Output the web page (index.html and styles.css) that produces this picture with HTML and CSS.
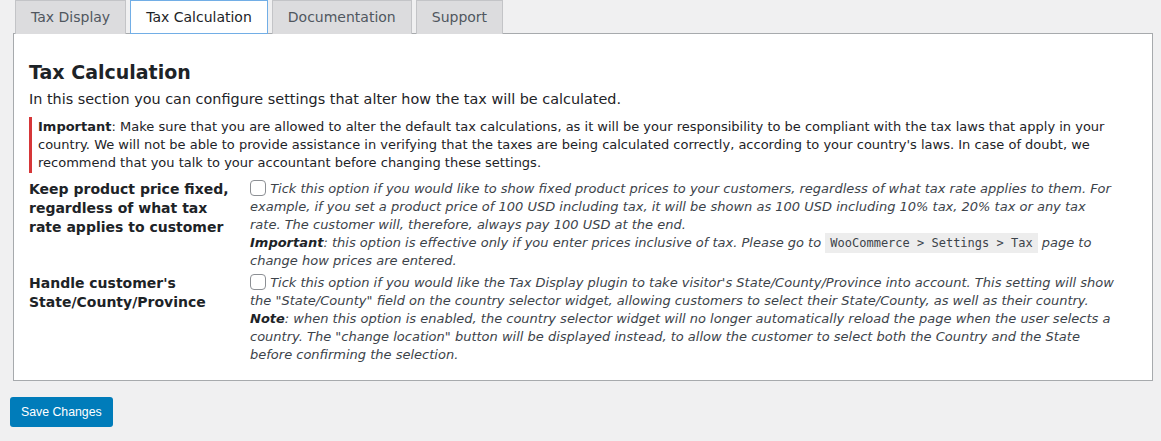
FILE: index.html
```html
<!DOCTYPE html>
<html>
<head>
<meta charset="utf-8">
<link rel="stylesheet" href="styles.css">
</head>
<body>
<div class="wrap">
  <nav class="tabs">
    <a class="tab">Tax Display</a>
    <a class="tab active">Tax Calculation</a>
    <a class="tab">Documentation</a>
    <a class="tab">Support</a>
  </nav>
  <section class="panel">
    <h2 class="title">Tax Calculation</h2>
    <p class="intro">In this section you can configure settings that alter how the tax will be calculated.</p>
    <div class="notice"><strong>Important</strong>: Make sure that you are allowed to alter the default tax calculations, as it will be your responsibility to be compliant with the tax laws that apply in your country. We will not be able to provide assistance in verifying that the taxes are being calculated correctly, according to your country's laws. In case of doubt, we recommend that you talk to your accountant before changing these settings.</div>
    <div class="row">
      <div class="label">Keep product price fixed, regardless of what tax rate applies to customer</div>
      <div class="field"><span class="cb"></span> Tick this option if you would like to show fixed product prices to your customers, regardless of what tax rate applies to them. For example, if you set a product price of 100 USD including tax, it will be shown as 100 USD including 10% tax, 20% tax or any tax rate. The customer will, therefore, always pay 100 USD at the end.<br><strong>Important</strong>: this option is effective only if you enter prices inclusive of tax. Please go to <code>WooCommerce &gt; Settings &gt; Tax</code> page to change how prices are entered.</div>
    </div>
    <div class="row">
      <div class="label">Handle customer's State/County/Province</div>
      <div class="field"><span class="cb"></span> Tick this option if you would like the Tax Display plugin to take visitor's State/County/Province into account. This setting will show the "State/County" field on the country selector widget, allowing customers to select their State/County, as well as their country.<br><strong>Note</strong>: when this option is enabled, the country selector widget will no longer automatically reload the page when the user selects a country. The "change location" button will be displayed instead, to allow the customer to select both the Country and the State before confirming the selection.</div>
    </div>
  </section>
  <button class="save">Save Changes</button>
</div>
</body>
</html>
```
FILE: styles.css
```css
html, body { margin: 0; padding: 0; background: #f0f0f1; }
body { font-family: "DejaVu Sans", Verdana, sans-serif; font-size: 13px; color: #3c434a; }
.wrap { padding: 0 8px 0 13px; }
.tabs { display: flex; gap: 4px; padding-left: 2px; height: 33px; }
.tab { display: block; box-sizing: border-box; height: 34px; padding: 0 15px; line-height: 33px; font-size: 14px; color: #50575e; background: #dcdcde; border: 1px solid #c3c4c7; border-bottom: none; }
.tab.active { background: #fff; color: #1d2327; border-color: #72aee6; border-bottom: 1px solid #72aee6; position: relative; z-index: 1; }
.panel { background: #fff; border: 1px solid #a7aaad; padding: 24px 34px 12px 15px; }
.title { margin: 0; font-size: 19px; color: #1d2327; line-height: 28px; }
.intro { margin: 4px 0 9px; font-size: 14.4px; line-height: 18px; color: #1d2327; }
.notice { border-left: 3px solid #d63638; padding: 1px 0 1px 6px; line-height: 18px; color: #1d2327; margin-bottom: 7px; margin-right: -19px; }
.notice strong { color: #1d2327; }
.row { display: grid; grid-template-columns: 221px 1fr; margin-bottom: 4px; }
.label { font-weight: bold; font-size: 14px; line-height: 19px; color: #1d2327; padding-right: 10px; }
.field { font-style: italic; line-height: 18px; }
.field strong { color: #1d2327; }
.cb { display: inline-block; width: 14px; height: 14px; border: 1px solid #8c8f94; border-radius: 4px; vertical-align: -3px; background: #fff; }
code { font-family: "DejaVu Sans Mono", monospace; font-style: normal; font-size: 12px; background: rgba(0,0,0,0.07); padding: 3px 5px; }
.save { margin: 16px 0 0 -3px; background: #007cba; color: #fff; border: none; border-radius: 3px; height: 30px; padding: 0 11px; font-family: "Liberation Sans", Arial, sans-serif; font-size: 12.3px; }
```
